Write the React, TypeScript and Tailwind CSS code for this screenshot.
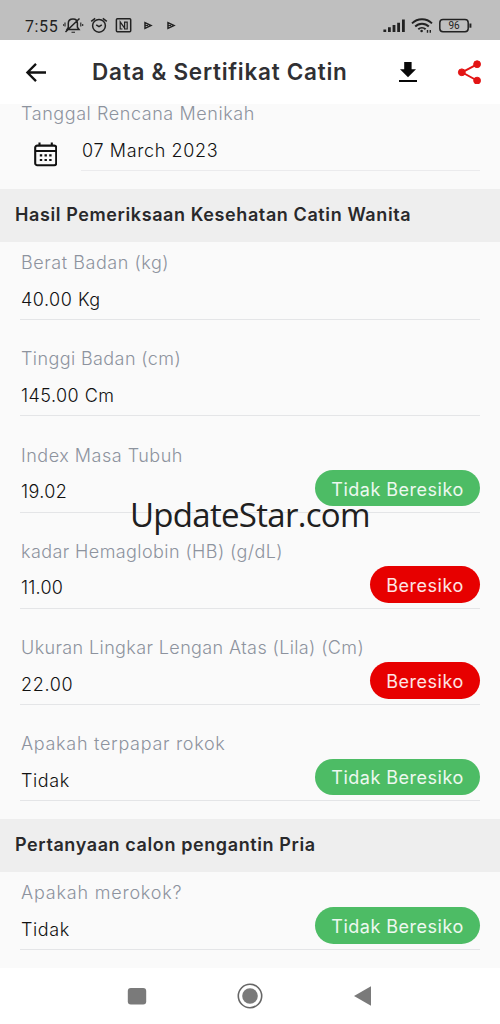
import type { ReactNode } from 'react'

type Field = {
  label: string
  labelClass: string
  value: string
  valueClass: string
  status?: 'safe' | 'risk'
}

const womanFields: Field[] = [
  { label: 'Berat Badan (kg)', labelClass: 'tracking-[0.55px]', value: '40.00 Kg', valueClass: 'tracking-[0.5px]' },
  { label: 'Tinggi Badan (cm)', labelClass: 'tracking-[0.4px]', value: '145.00 Cm', valueClass: 'tracking-[0.45px]' },
  { label: 'Index Masa Tubuh', labelClass: 'tracking-[0.5px]', value: '19.02', valueClass: 'tracking-[0.4px]', status: 'safe' },
  { label: 'kadar Hemaglobin (HB) (g/dL)', labelClass: 'tracking-[0.41px]', value: '11.00', valueClass: 'tracking-[0.2px]', status: 'risk' },
  { label: 'Ukuran Lingkar Lengan Atas (Lila) (Cm)', labelClass: 'tracking-[0.38px]', value: '22.00', valueClass: 'tracking-[0.65px]', status: 'risk' },
  { label: 'Apakah terpapar rokok', labelClass: 'tracking-[0.7px]', value: 'Tidak', valueClass: 'tracking-[0.6px]', status: 'safe' },
]

const manFields: Field[] = [
  { label: 'Apakah merokok?', labelClass: 'tracking-[0.8px]', value: 'Tidak', valueClass: 'tracking-[0.6px]', status: 'safe' },
]

function StatusBar() {
  return (
    <div className="flex h-10 shrink-0 items-end bg-[#bfbfbf] text-[#222]">
      <span className="ml-[25px] w-[38px] whitespace-nowrap font-[Roboto,sans-serif] text-[16px] leading-[27px] tracking-[0.6px]">7:55</span>
      <svg className="h-10 w-[120px]" viewBox="63 0 120 40" fill="none" stroke="currentColor" strokeWidth="1.5">
        {/* muted bell */}
        <path d="M67 29.5h12l-1.6-2.2v-4.1c0-2.7-1.7-4.3-4.4-4.3s-4.7 1.6-4.7 4.3v4.1zM65.5 32l14-13.5" />
        <path d="M71.5 32.3h3.5M65 22.5v4M63.2 24v2M80.8 22.5v4M82.7 24v2" strokeWidth="1.1" />
        {/* alarm */}
        <circle cx="99" cy="25.8" r="6.4" />
        <path d="m91.2 21.4 4-3M106.8 21.4l-4-3M96.2 24.8l2.8 1.8 2.8-1.8" />
        {/* nfc */}
        <rect x="116.4" y="18.8" width="14.3" height="13" rx="1" />
        <path d="M120.2 29.5V22l4.4 6.2M122.4 29h-2.2M127.2 21.5V29h-2.6v-6.8h2.6" strokeWidth="1.2" />
        {/* play store updates */}
        <path d="M145 22.6v5.8l6-2.9z" />
        <path d="M168 22.6v5.8l6-2.9z" />
        <path d="M145 25.5h3M168 25.5h3" strokeWidth="1" />
      </svg>
      <svg className="ml-auto mr-[27px] h-10 w-[92px]" viewBox="381 0 92 40" fill="none" stroke="currentColor">
        {/* signal */}
        <path d="M384.8 29.5V32M389.4 27.3V32M394 25V32M398.6 22.8V32M403.4 19.5V32" strokeWidth="2.8" />
        {/* wifi */}
        <path d="M412 23.4a14.2 14.2 0 0 1 20 0M415.2 26.5a9.6 9.6 0 0 1 13.6 0M418.3 29.3a5.3 5.3 0 0 1 7.3 0" strokeWidth="1.9" />
        <circle cx="421.6" cy="31" r="1.3" fill="currentColor" stroke="none" />
        <path d="M427.5 30v2.8M430.3 30v2.8" strokeWidth="1.4" />
        {/* battery */}
        <rect x="439.8" y="19.5" width="28.4" height="12.2" rx="3.2" strokeWidth="1.5" />
        <path d="M470.4 23.5v4.2" strokeWidth="2" />
        <text x="454" y="29.3" textAnchor="middle" fill="currentColor" stroke="none" fontFamily="Roboto, sans-serif" fontSize="10">96</text>
      </svg>
    </div>
  )
}

function Header() {
  return (
    <header className="flex h-16 shrink-0 items-center bg-white">
      <svg className="ml-[25px] h-6 w-[22px]" viewBox="0 0 22 24" fill="none" stroke="#111" strokeWidth="2.3">
        <path d="M21 12.5H2.2M11 3.9l-8.6 8.6 8.6 8.6" />
      </svg>
      <h1 className="ml-[45px] whitespace-nowrap text-[22.5px] font-semibold leading-8 tracking-[0.73px] text-[#303033]">Data &amp; Sertifikat Catin</h1>
      <svg className="ml-auto h-6 w-5" viewBox="0 0 20 24" fill="#080808">
        <path d="M6.2 2h7.4v7.2h4.4L10 17.2 2 9.2h4.2zM1 20h18v2H1z" />
      </svg>
      <svg className="ml-[39px] mr-[19px] h-6 w-6" viewBox="0 0 24 24" fill="#e31414" stroke="#e31414">
        <path d="M20 4.3 5 12.3l15 8.2" fill="none" strokeWidth="1.9" />
        <circle cx="20.1" cy="4.2" r="3.4" />
        <circle cx="4.8" cy="12.3" r="3.4" />
        <circle cx="20.1" cy="20.6" r="3.4" />
      </svg>
    </header>
  )
}

function SectionTitle({ children }: { children: ReactNode }) {
  return (
    <div className="flex h-[52.5px] items-center bg-[#eee] pl-[15px]">
      <h2 className="whitespace-nowrap text-[18px] font-semibold leading-6 tracking-[0.6px] text-[#29292b]">{children}</h2>
    </div>
  )
}

function StatusPill({ status }: { status: 'safe' | 'risk' }) {
  const safe = status === 'safe'
  return (
    <span
      className={`flex h-[36.5px] items-center justify-center whitespace-nowrap rounded-full pt-[3px] text-[18px] leading-6 tracking-[0.5px] text-white/90 ${safe ? 'w-[165px] bg-[#4dbc65]' : 'w-[110px] bg-[#e70000]'}`}
    >
      {safe ? 'Tidak Beresiko' : 'Beresiko'}
    </span>
  )
}

function FieldRow({ field }: { field: Field }) {
  return (
    <div className="h-[96.25px] px-5">
      <div className="flex h-[78.5px] flex-col border-b border-[#e4e5e7]">
        <p className={`ml-px mt-[9.5px] whitespace-nowrap text-[18px] font-light leading-6 text-[#8d939e] ${field.labelClass}`}>{field.label}</p>
        <div className="mt-[2px] flex h-[37px] items-center justify-between">
          <p className={`ml-px pt-[8px] text-[18px] font-light leading-7 text-[#111] ${field.valueClass}`}>{field.value}</p>
          {field.status && <StatusPill status={field.status} />}
        </div>
      </div>
    </div>
  )
}

function DateRow() {
  return (
    <div className="h-[87px] px-5">
      <p className="-mt-0.5 ml-px whitespace-nowrap text-[18px] font-light leading-6 tracking-[0.57px] text-[#8d939e]">Tanggal Rencana Menikah</p>
      <div className="flex">
        <svg className="ml-[13px] mt-[15px] h-[26px] w-6 shrink-0" viewBox="0 0 24 26" fill="none" stroke="#111" strokeWidth="2.1">
          <rect x="2.2" y="4.6" width="21" height="19.6" rx="2" />
          <path d="M2.2 10h21M6.5 1.6v3.5M18.8 1.6v3.5" />
          <path d="M6.8 14.4h2.4M11.5 14.4h2.4M16.2 14.4h2.4M6.8 19h2.4M11.5 19h2.4M16.2 19h2.4" />
        </svg>
        <p className="ml-6 flex h-[45px] grow items-center border-b border-[#ebebed] pl-px pt-[5px] text-[18px] font-light tracking-[0.63px] text-[#111]">07 March 2023</p>
      </div>
    </div>
  )
}

function NavigationBar() {
  return (
    <nav className="flex h-14 shrink-0 items-center justify-center bg-white">
      <svg className="h-7 w-[250px]" viewBox="0 0 250 28" fill="#7a7a7a">
        <rect x="2.8" y="6" width="18.4" height="16.6" rx="3" />
        <circle cx="125" cy="14" r="11.7" fill="none" stroke="#666" strokeWidth="1.6" />
        <circle cx="125" cy="14" r="7.8" />
        <path d="M229 14 246 4.3v19.4z" />
      </svg>
    </nav>
  )
}

export default function App() {
  return (
    <div className="relative flex h-[1024px] w-[500px] flex-col overflow-hidden bg-[#fafafa] font-[Inter,sans-serif]">
      <StatusBar />
      <Header />
      <main className="min-h-0 flex-1 overflow-hidden">
        <DateRow />
        <SectionTitle>Hasil Pemeriksaan Kesehatan Catin Wanita</SectionTitle>
        {womanFields.map((field) => (
          <FieldRow key={field.label} field={field} />
        ))}
        <SectionTitle>Pertanyaan calon pengantin Pria</SectionTitle>
        {manFields.map((field) => (
          <FieldRow key={field.label} field={field} />
        ))}
      </main>
      <NavigationBar />
      {/* watermark */}
      <span className="pointer-events-none absolute left-[130px] top-[492px] whitespace-nowrap font-['Open_Sans',sans-serif] text-[33px] leading-[46px] tracking-[-0.7px] text-[#202020]">UpdateStar.com</span>
    </div>
  )
}
